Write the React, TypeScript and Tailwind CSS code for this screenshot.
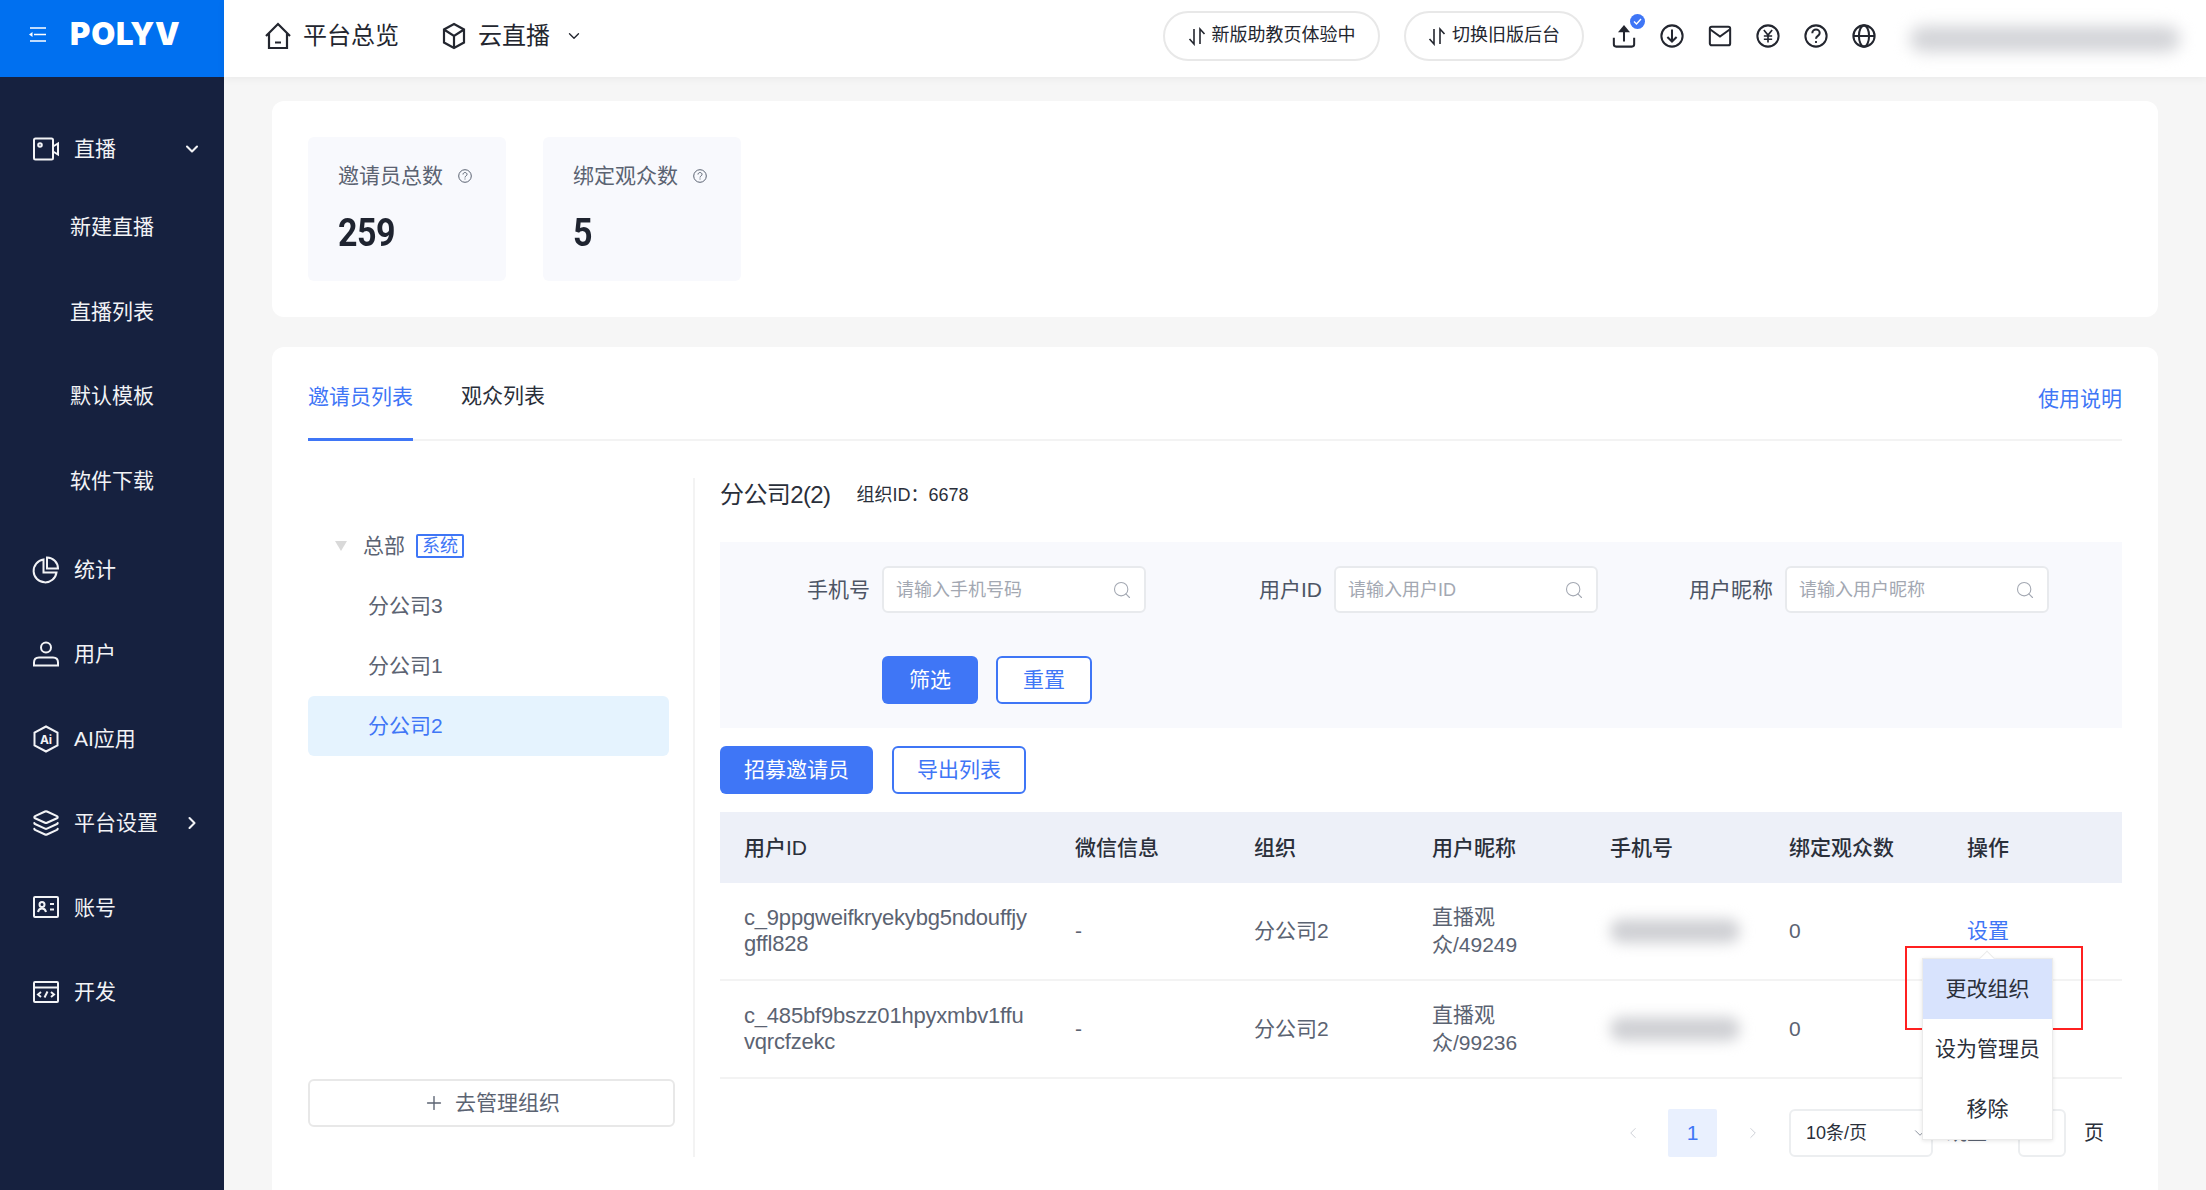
import { ChevronDown, ChevronLeft, ChevronRight, Layers, Plus, Search } from "lucide-react"

const FONT = "font-['Liberation_Sans','Noto_Sans_CJK_SC',sans-serif]"

function VideoIcon() {
  return (
    <svg width="28" height="28" viewBox="0 0 28 28" fill="none" stroke="currentColor" strokeWidth="2">
      <rect x="2" y="3.500" width="19" height="21" rx="1.500" />
      <circle cx="8" cy="10" r="1.800" />
      <path d="M21 11.500l5-3v11l-5-3" />
    </svg>
  )
}

function PieIcon() {
  return (
    <svg width="28" height="28" viewBox="0 0 28 28" fill="none" stroke="currentColor" strokeWidth="2">
      <path d="M11.500 3.500a11.500 11.500 0 1 0 13 13h-13z" />
      <path d="M15 1.500a11 11 0 0 1 11 11H15z" />
    </svg>
  )
}

function UserIcon() {
  return (
    <svg width="28" height="28" viewBox="0 0 28 28" fill="none" stroke="currentColor" strokeWidth="2">
      <circle cx="14" cy="7.500" r="5" />
      <path d="M2 25.500v-3c0-3 2-5 5-5h14c3 0 5 2 5 5v3z" />
    </svg>
  )
}

function AiIcon() {
  return (
    <svg width="28" height="28" viewBox="0 0 28 28" fill="none" stroke="currentColor" strokeWidth="2">
      <path d="M14 1.500l11.500 6.200v12.600L14 26.500 2.500 20.300V7.700z" />
      <text x="14" y="18.500" textAnchor="middle" fontSize="12" fontWeight="700" fontFamily="Inter" fill="currentColor" stroke="none">Ai</text>
    </svg>
  )
}

function IdIcon() {
  return (
    <svg width="28" height="28" viewBox="0 0 28 28" fill="none" stroke="currentColor" strokeWidth="2">
      <rect x="2" y="4" width="24" height="20" rx="1" />
      <circle cx="10" cy="11.500" r="2.500" />
      <path d="M6 19c.5-2.500 2-3.500 4-3.500s3.500 1 4 3.500M18 11h4M18 16.500h4" />
    </svg>
  )
}

function CodeIcon() {
  return (
    <svg width="28" height="28" viewBox="0 0 28 28" fill="none" stroke="currentColor" strokeWidth="2">
      <rect x="2" y="4" width="24" height="20" rx="1" />
      <path d="M2 9.500h24M9 14l-3 2.500 3 2.500M19 14l3 2.500-3 2.500M15.500 13.500l-3 6" />
    </svg>
  )
}

function SwapIcon() {
  return (
    <svg width="18" height="20" viewBox="0 0 18 20" fill="none" stroke="currentColor" strokeWidth="1.600">
      <path d="M6 3v15L1.500 13M12 18V3l4.500 5" />
    </svg>
  )
}

function MenuIcon() {
  return (
    <svg width="17" height="15" viewBox="0 0 17 15" fill="none" stroke="currentColor" strokeWidth="1.600">
      <path d="M1 1h16M5 7.500h12M1 14h16" />
      <path d="M3.500 5v5L0 7.500z" fill="currentColor" stroke="none" />
    </svg>
  )
}

function HeaderIcon({ children }: { children: React.ReactNode }) {
  return (
    <svg width="24" height="24" viewBox="0 0 26 26" fill="none" stroke="#23262f" strokeWidth="2.200">
      {children}
    </svg>
  )
}

function HeaderIcons() {
  return (
    <div className="flex items-center gap-[24px]">
      <div className="relative">
        <HeaderIcon>
          <path d="M2 15v7a2.500 2.500 0 0 0 2.500 2.500h17A2.500 2.500 0 0 0 24 22v-7M13 19V7" />
          <path d="M13 1l6.500 8h-13z" fill="#23262f" stroke="none" />
        </HeaderIcon>
        <div className="absolute -right-[9px] -top-[10px] flex h-[15px] w-[15px] items-center justify-center rounded-full bg-[#3f76f6]">
          <svg width="9" height="9" viewBox="0 0 9 9" fill="none" stroke="#fff" strokeWidth="1.400">
            <path d="M1 4.500l2.500 2.500L8 2" />
          </svg>
        </div>
      </div>
      <HeaderIcon>
        <circle cx="13" cy="13" r="11.500" />
        <path d="M13 6v13M8 14l5 5 5-5" />
      </HeaderIcon>
      <HeaderIcon>
        <rect x="2" y="3" width="22" height="20" rx="2" />
        <path d="M2.500 6l10.500 7.500L23.500 6" />
      </HeaderIcon>
      <HeaderIcon>
        <circle cx="13" cy="13" r="11.500" />
        <path d="M8.500 6.500L13 12l4.500-5.500M13 12v8M8.500 13h9M8.500 16.500h9" strokeWidth="1.800" />
      </HeaderIcon>
      <HeaderIcon>
        <circle cx="13" cy="13" r="11.500" />
        <path d="M9 10c0-2.500 2-4 4-4s4 1.500 4 3.700c0 3.300-4 3-4 6.300" />
        <path d="M13 18.500v2" />
      </HeaderIcon>
      <HeaderIcon>
        <circle cx="13" cy="13" r="11.500" />
        <ellipse cx="13" cy="13" rx="5.500" ry="11.500" />
        <path d="M1.500 13h23" />
      </HeaderIcon>
    </div>
  )
}

function Help() {
  return (
    <svg width="14" height="14" viewBox="0 0 14 14" fill="none" stroke="#5b6372" strokeWidth="1">
      <circle cx="7" cy="7" r="6.300" />
      <path d="M5 5.500c0-1.200 1-2 2-2s2 .8 2 1.900c0 1.600-2 1.500-2 3.100M7 9.500v1" />
    </svg>
  )
}

const liveChildren = ["新建直播", "直播列表", "默认模板", "软件下载"]
const menus = [
  { icon: <PieIcon />, label: "统计" },
  { icon: <UserIcon />, label: "用户" },
  { icon: <AiIcon />, label: "AI应用" },
  { icon: <Layers size={28} strokeWidth={1.800} />, label: "平台设置", arrow: true },
  { icon: <IdIcon />, label: "账号" },
  { icon: <CodeIcon />, label: "开发" },
]

function Sidebar() {
  return (
    <aside className="flex w-[224px] shrink-0 flex-col bg-[#16213f] text-[#f2f3f6]">
      <div className="flex h-[77px] items-start gap-[24px] bg-[#0070f0] pl-[29px] pt-[16px] text-white">
        <div className="pt-[11px]"><MenuIcon /></div>
        <span className="font-['Inter',sans-serif] text-[31px] font-black leading-[36px] tracking-[0.8px]">POLYV</span>
      </div>
      <div className="mt-[36px] flex h-[72px] items-center pl-[32px] pr-[22px]">
        <VideoIcon />
        <span className="ml-[14px] flex-1 text-[21px]">直播</span>
        <ChevronDown size={20} strokeWidth={2.500} />
      </div>
      {liveChildren.map(item => (
        <div key={item} className="flex h-[84.4px] items-center pl-[70px] text-[21px]">{item}</div>
      ))}
      <div className="mt-[5px]">
        {menus.map(menu => (
          <div key={menu.label} className="flex h-[84.4px] items-center pl-[32px] pr-[22px]">
            {menu.icon}
            <span className="ml-[14px] flex-1 text-[21px]">{menu.label}</span>
            {menu.arrow && <ChevronRight size={20} strokeWidth={2.500} />}
          </div>
        ))}
      </div>
    </aside>
  )
}

function Header() {
  return (
    <header className="flex h-[77px] shrink-0 items-center bg-white pb-[6px] pl-[40px] text-[#23262f] shadow-[0_2px_8px_rgba(0,0,0,0.05)]">
      <svg width="28" height="28" viewBox="0 0 28 28" fill="none" stroke="#23262f" strokeWidth="2.200">
        <path d="M2 14L14 2l12 12M5 11.500V26h18V11.500M11 20.500h6" />
      </svg>
      <span className="ml-[11px] text-[24px]">平台总览</span>
      <svg className="ml-[43px]" width="24" height="28" viewBox="0 0 24 28" fill="none" stroke="#23262f" strokeWidth="2.200">
        <path d="M12 2l10 5.500v13L12 26 2 20.500v-13zM2 7.500L12 14l10-6.500M12 14v12" />
      </svg>
      <span className="ml-[12px] text-[24px]">云直播</span>
      <ChevronDown className="ml-[15px]" size={18} strokeWidth={1.800} />
      <div className="ml-auto flex items-center">
        <button className="flex h-[50px] w-[217px] items-center justify-center gap-[6px] rounded-full border-2 border-[#e8e8e8] text-[18px]"><SwapIcon />新版助教页体验中</button>
        <button className="ml-[24px] flex h-[50px] w-[180px] items-center justify-center gap-[6px] rounded-full border-2 border-[#e8e8e8] text-[18px]"><SwapIcon />切换旧版后台</button>
        <div className="ml-[28px]"><HeaderIcons /></div>
        <div className="ml-[34px] mr-[26px] mt-[6px] h-[26px] w-[270px] rounded-full bg-[#d3d4d8] blur-[8px]" />
      </div>
    </header>
  )
}

function Stat({ label, value }: { label: string; value: string }) {
  return (
    <div className="h-[144px] w-[198px] rounded-[6px] bg-[#f8f9fd] pl-[30px] pt-[23px]">
      <div className="flex items-center gap-[15px] text-[21px] leading-[32px] text-[#5b6372]">{label}<Help /></div>
      <div className="mt-[20px] origin-left scale-y-[1.150] font-['Roboto',sans-serif] text-[34px] font-bold leading-[40px] tracking-[-0.5px] text-[#1f2430]">{value}</div>
    </div>
  )
}

function Tree() {
  return (
    <div className="flex h-[679px] w-[387px] shrink-0 flex-col border-r-2 border-[#f3f3f3] pr-[24px] text-[21px] text-[#5b6372]">
      <div className="mt-[38px] flex h-[60px] items-center pl-[27px]">
        <div className="h-0 w-0 border-x-[6px] border-t-[10px] border-x-transparent border-t-[#d9d9d9]" />
        <span className="ml-[16px]">总部</span>
        <span className="ml-[11px] flex h-[24px] w-[48px] items-center justify-center rounded-[2px] border-2 border-[#3f76f6] text-[18px] leading-none text-[#3f76f6]">系统</span>
      </div>
      <div className="flex h-[60px] items-center pl-[60px]">分公司3</div>
      <div className="flex h-[60px] items-center pl-[60px]">分公司1</div>
      <div className="flex h-[60px] items-center rounded-[6px] bg-[#e5f3fe] pl-[60px] text-[#3f76f6]">分公司2</div>
      <button className="mb-[30px] mt-auto flex h-[48px] w-[367px] items-center justify-center gap-[10px] rounded-[6px] border-2 border-[#e8e8e8]">
        <Plus size={22} strokeWidth={1.500} />去管理组织
      </button>
    </div>
  )
}

function Field({ label, placeholder }: { label: string; placeholder: string }) {
  return (
    <div className="flex items-center gap-[12px]">
      <span className="w-[150px] text-right text-[21px] text-[#4d5565]">{label}</span>
      <div className="flex h-[47px] w-[264px] items-center justify-between rounded-[6px] border-2 border-[#e8eaed] bg-white px-[12px] pt-[1px] text-[18px] text-[#a3a8b2]">
        {placeholder}
        <Search size={20} strokeWidth={1.300} />
      </div>
    </div>
  )
}

const columns = ["微信信息", "组织", "用户昵称", "手机号", "绑定观众数", "操作"]
const rows = [
  { id: ["c_9ppgweifkryekybg5ndouffjy", "gffl828"], nick: "直播观众/49249" },
  { id: ["c_485bf9bszz01hpyxmbv1ffu", "vqrcfzekc"], nick: "直播观众/99236" },
]

function DropMenu() {
  return (
    <div className="absolute -left-[39px] top-[31px] z-10 h-[84px] w-[178px] border-2 border-[#ff2020]">
      <div className="absolute left-[15px] top-[10px] w-[131px] border border-[#ebebeb] bg-white text-center text-[21px] leading-[60px] text-[#2a2f3a] shadow-[0_1px_4px_rgba(0,0,0,0.1)]">
        <div className="absolute -top-[6px] left-[58px] h-[12px] w-[12px] rotate-45 border-l border-t border-[#ebebeb] bg-white" />
        <div className="relative bg-[#d8e3fd]">更改组织</div>
        <div>设为管理员</div>
        <div>移除</div>
      </div>
    </div>
  )
}

function UserTable() {
  return (
    <div className="text-[21px]">
      <div className="grid h-[71px] grid-cols-[332px_179px_178px_178px_179px_178px_1fr] items-center bg-[#edf0f8] font-medium text-[#2a2f3a]">
        <div className="pl-[24px]">用户ID</div>
        {columns.map(col => <div key={col} className="pl-[23px]">{col}</div>)}
      </div>
      {rows.map((row, i) => (
        <div key={row.nick} className="grid h-[98px] grid-cols-[332px_179px_178px_178px_179px_178px_1fr] items-center border-b-2 border-[#f3f3f3] text-[#5b6372]">
          <div className="pl-[24px] text-[22px] leading-[26px] tracking-[-0.2px]">
            {row.id.map(line => <div key={line}>{line}</div>)}
          </div>
          <div className="pl-[23px]">-</div>
          <div className="pl-[23px]">分公司2</div>
          <div className="pl-[23px] pr-[50px] text-[21px] leading-[28px]">{row.nick}</div>
          <div className="pl-[23px]"><div className="h-[24px] w-[130px] rounded-full bg-[#cfd0d4] blur-[7px]" /></div>
          <div className="pl-[23px]">0</div>
          <div className="relative pl-[23px] text-[#3f76f6]">
            {i === 0 ? "设置" : ""}
            {i === 0 && <DropMenu />}
          </div>
        </div>
      ))}
    </div>
  )
}

function Pagination() {
  return (
    <div className="mt-[30px] flex items-center pr-[18px] text-[#5b6372]">
      <div className="ml-auto flex items-center">
        <ChevronLeft size={18} strokeWidth={1.200} className="text-[#c8ccd3]" />
        <div className="ml-[26px] flex h-[48px] w-[49px] items-center justify-center rounded-[2px] bg-[#e9f0fe] text-[21px] text-[#3f76f6]">1</div>
        <ChevronRight size={18} strokeWidth={1.200} className="ml-[27px] text-[#c8ccd3]" />
        <div className="ml-[27px] flex h-[48px] w-[144px] items-center justify-between rounded-[6px] border-2 border-[#eceef0] pl-[15px] pr-[2px] text-[18px] text-[#2a2f3a]">
          10条/页
          <ChevronDown size={18} strokeWidth={1.300} className="text-[#8a909c]" />
        </div>
        <span className="ml-[14px] text-[20px]">跳至</span>
        <div className="ml-[31px] h-[48px] w-[48px] rounded-[6px] border-2 border-[#eceef0]" />
        <span className="ml-[18px] text-[20px] text-[#2a2f3a]">页</span>
      </div>
    </div>
  )
}

function Detail() {
  return (
    <div className="min-w-0 flex-1 pl-[25px]">
      <div className="flex h-[34px] items-center">
        <span className="text-[24px] tracking-[-0.6px] text-[#2a2f3a]">分公司2(2)</span>
        <span className="ml-[26px] text-[18px] text-[#2a2f3a]">组织ID：6678</span>
      </div>
      <div className="mt-[30px] h-[186px] bg-[#f8f9fd] pt-[24px]">
        <div className="grid grid-cols-[452px_451px_451px]">
          <Field label="手机号" placeholder="请输入手机号码" />
          <Field label="用户ID" placeholder="请输入用户ID" />
          <Field label="用户昵称" placeholder="请输入用户昵称" />
        </div>
        <div className="ml-[162px] mt-[43px] flex gap-[18px] text-[21px]">
          <button className="h-[48px] w-[96px] rounded-[6px] bg-[#3f76f6] text-white">筛选</button>
          <button className="h-[48px] w-[96px] rounded-[6px] border-2 border-[#3f76f6] bg-white text-[#3f76f6]">重置</button>
        </div>
      </div>
      <div className="mb-[18px] mt-[18px] flex gap-[19px] text-[21px]">
        <button className="h-[48px] w-[153px] rounded-[6px] bg-[#3f76f6] text-white">招募邀请员</button>
        <button className="h-[48px] w-[134px] rounded-[6px] border-2 border-[#3f76f6] bg-white text-[#3f76f6]">导出列表</button>
      </div>
      <UserTable />
      <Pagination />
    </div>
  )
}

function App() {
  return (
    <div className={`flex h-[1190px] w-[2206px] overflow-hidden bg-[#f6f6f6] ${FONT}`}>
      <Sidebar />
      <div className="flex min-w-0 flex-1 flex-col">
        <Header />
        <main className="flex flex-1 flex-col gap-[30px] pl-[48px] pr-[48px] pt-[24px]">
          <section className="flex h-[216px] shrink-0 gap-[37px] rounded-[12px] bg-white pl-[36px] pt-[36px]">
            <Stat label="邀请员总数" value="259" />
            <Stat label="绑定观众数" value="5" />
          </section>
          <section className="flex-1 rounded-t-[12px] bg-white px-[36px]">
            <div className="flex h-[94px] items-end border-b-2 border-[#f3f3f3] text-[21px]">
              <div className="-mb-[2px] flex h-[72px] items-center border-b-[3px] border-[#3f76f6] pb-[13px] text-[#3f76f6]">邀请员列表</div>
              <div className="ml-[48px] flex h-[72px] items-center pb-[15px] text-[#2a2f3a]">观众列表</div>
              <div className="ml-auto flex h-[72px] items-center pb-[9px] text-[#3f76f6]">使用说明</div>
            </div>
            <div className="mt-[37px] flex">
              <Tree />
              <Detail />
            </div>
          </section>
        </main>
      </div>
    </div>
  )
}

export default App
